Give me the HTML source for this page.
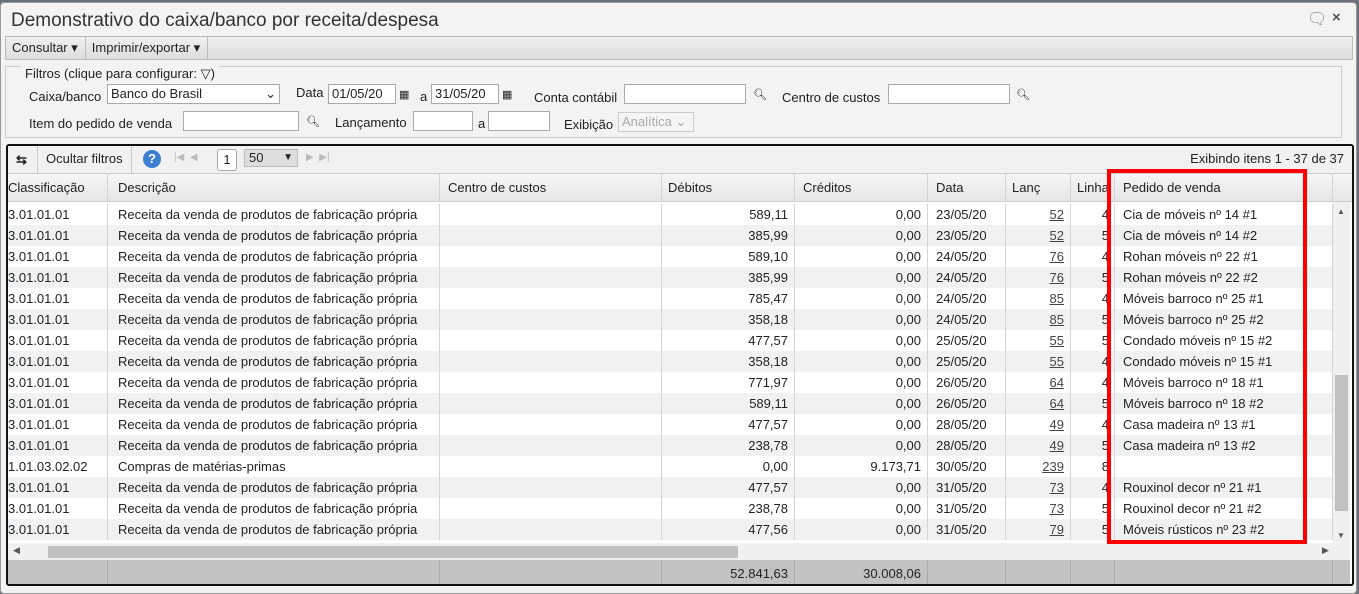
<!DOCTYPE html><html><head><style>
body{margin:0;width:1359px;height:594px;background:#6b7178;font-family:"Liberation Sans",sans-serif;font-size:13px;color:#222;position:relative;overflow:hidden}
.win{position:absolute;left:0;top:2px;width:1355px;height:590px;background:#f3f3f3;border:1px solid #999;border-radius:4px}
.title{position:absolute;left:10px;top:7px;font-size:19px;color:#333}
.tb{position:absolute;left:4px;top:33px;width:1346px;height:22px;background:linear-gradient(#f0f0f0,#ddd);border:1px solid #bbb}
.tb span{display:inline-block;padding:3px 7px 0 6px;height:19px;border-right:1px solid #bbb}
fieldset{position:absolute;left:4px;top:63px;width:1335px;height:70px;border:1px solid #ccc;margin:0;padding:0}
.a{position:absolute;white-space:nowrap}
.in{position:absolute;height:20px;background:#fff;border:1px solid #aaa;box-sizing:border-box;padding:1px 3px}
.grid{position:absolute;left:5px;top:141px;width:1344px;height:438px;border:2px solid #111;border-radius:3px;background:#fff;overflow:hidden}
.gt{position:absolute;left:0;top:0;width:100%;height:27px;background:#f1f1f1;border-bottom:1px solid #ccc}
.hd{position:absolute;left:0;top:28px;width:100%;height:27px;background:linear-gradient(#f6f6f6,#e6e6e6);border-bottom:1px solid #ccc}
.c{position:absolute;top:0;height:100%;box-sizing:border-box;border-right:1px solid #d5d5d5;padding:6px 6px 0;white-space:nowrap;overflow:hidden}
.row{position:absolute;left:0;width:1325px;height:21px}
.row .c{padding-top:3px}
.r{text-align:right}
u{color:#444}
</style></head><body>
<div class="win">
<div class="title">Demonstrativo do caixa/banco por receita/despesa</div>
<div class="a" style="left:1306px;top:6px;font-size:16px;color:#888">&#128488;</div>
<div class="a" style="left:1331px;top:6px;font-size:15px;font-weight:bold;color:#555">×</div>
<div class="tb"><span>Consultar ▾</span><span>Imprimir/exportar ▾</span></div>
<fieldset></fieldset>
<div class="a" style="left:20px;top:63px;background:#f3f3f3;padding:0 4px">Filtros (clique para configurar: ▽)</div>
<div class="a" style="left:28px;top:86px">Caixa/banco</div>
<div class="in" style="left:106px;top:81px;width:173px">Banco do Brasil<span style="float:right">⌄</span></div>
<div class="a" style="left:295px;top:82px">Data</div>
<div class="in" style="left:327px;top:81px;width:68px">01/05/20</div>
<div class="a" style="left:398px;top:85px;font-size:11px">▦</div>
<div class="a" style="left:419px;top:86px">a</div>
<div class="in" style="left:430px;top:81px;width:68px">31/05/20</div>
<div class="a" style="left:501px;top:85px;font-size:11px">▦</div>
<div class="a" style="left:533px;top:87px">Conta contábil</div>
<div class="in" style="left:623px;top:81px;width:122px"></div>
<div class="a" style="left:752px;top:85px;font-size:11px">🔍︎</div>
<div class="a" style="left:781px;top:87px">Centro de custos</div>
<div class="in" style="left:887px;top:81px;width:122px"></div>
<div class="a" style="left:1015px;top:85px;font-size:11px">🔍︎</div>
<div class="a" style="left:28px;top:113px">Item do pedido de venda</div>
<div class="in" style="left:182px;top:108px;width:116px"></div>
<div class="a" style="left:305px;top:112px;font-size:11px">🔍︎</div>
<div class="a" style="left:334px;top:112px">Lançamento</div>
<div class="in" style="left:412px;top:108px;width:60px"></div>
<div class="a" style="left:477px;top:113px">a</div>
<div class="in" style="left:487px;top:108px;width:62px"></div>
<div class="a" style="left:563px;top:114px">Exibição</div>
<div class="in" style="left:617px;top:109px;width:76px;color:#aaa;border-color:#ccc;background:#f5f5f5">Analítica ⌄</div>
<div class="grid">
<div class="gt">
<div class="a" style="left:8px;top:6px;font-weight:bold">⇆</div>
<div class="a" style="left:29px;top:0;height:27px;border-left:1px solid #ccc;border-right:1px solid #ccc;padding:5px 8px 0;box-sizing:border-box">Ocultar filtros</div>
<div class="a" style="left:135px;top:4px;width:18px;height:18px;border-radius:50%;background:#3c7fd0;color:#fff;text-align:center;font-weight:bold;font-size:13px;line-height:18px">?</div>
<div class="a" style="left:166px;top:6px;color:#bbb;font-size:10px">|◀ &nbsp;◀</div>
<div class="a" style="left:209px;top:3px;width:18px;height:20px;border:1px solid #aaa;border-radius:3px;background:#fff;text-align:center;line-height:20px">1</div>
<div class="a" style="left:236px;top:3px;width:54px;height:18px;background:#ddd;border:1px solid #bbb;padding-left:4px;box-sizing:border-box;line-height:16px">50 <span style="float:right;padding-right:4px;font-size:10px">▼</span></div>
<div class="a" style="left:298px;top:6px;color:#bbb;font-size:10px">▶ &nbsp;▶|</div>
<div class="a" style="right:8px;top:5px">Exibindo itens 1 - 37 de 37</div>
</div>
<div class="hd">
<div class="c" style="left:-6px;width:106px;padding-left:6px">Classificação</div>
<div class="c" style="left:104px;width:328px">Descrição</div>
<div class="c" style="left:432px;width:222px;padding-left:8px">Centro de custos</div>
<div class="c" style="left:654px;width:133px">Débitos</div>
<div class="c" style="left:787px;width:133px;padding-left:8px">Créditos</div>
<div class="c" style="left:920px;width:78px;padding-left:8px">Data</div>
<div class="c" style="left:998px;width:65px">Lanç</div>
<div class="c" style="left:1063px;width:44px">Linha</div>
<div class="c" style="left:1107px;width:218px;padding-left:8px">Pedido de venda</div>
</div>
<div id="rows"></div>
<div class="a" style="left:1325px;top:56px;width:17px;height:342px;background:#f0f0f0"></div>
<div class="a" style="left:1327px;top:229px;width:13px;height:136px;background:#c1c1c1"></div>
<div class="a" style="left:1329px;top:61px;font-size:8px;color:#555">▲</div>
<div class="a" style="left:1329px;top:385px;font-size:8px;color:#555">▼</div>
<div class="a" style="left:0;top:397px;width:1342px;height:17px;background:#f0f0f0"></div>
<div class="a" style="left:40px;top:400px;width:690px;height:12px;background:#c1c1c1"></div>
<div class="a" style="left:5px;top:399px;font-size:9px;color:#555">◀</div>
<div class="a" style="left:1314px;top:399px;font-size:9px;color:#555">▶</div>
<div class="a" style="left:0;top:414px;width:1342px;height:24px;background:#c2c2c2">
<div class="c r" style="left:-6px;width:106px;border-color:#aaa"></div>
<div class="c" style="left:104px;width:328px;border-color:#aaa"></div>
<div class="c" style="left:432px;width:222px;border-color:#aaa"></div>
<div class="c r" style="left:654px;width:133px;border-color:#aaa">52.841,63</div>
<div class="c r" style="left:787px;width:133px;border-color:#aaa">30.008,06</div>
<div class="c" style="left:920px;width:78px;border-color:#aaa"></div>
<div class="c" style="left:998px;width:65px;border-color:#aaa"></div>
<div class="c" style="left:1063px;width:44px;border-color:#aaa"></div>
<div class="c" style="left:1107px;width:218px;border-color:#aaa"></div>
</div>
</div>
<div class="a" style="left:1106px;top:166px;width:192px;height:367px;border:4px solid #f00"></div>
</div>
<script>
var R="Receita da venda de produtos de fabricação própria";
var d=[["3.01.01.01",R,"589,11","0,00","23/05/20","52","4","Cia de móveis nº 14 #1"],
["3.01.01.01",R,"385,99","0,00","23/05/20","52","5","Cia de móveis nº 14 #2"],
["3.01.01.01",R,"589,10","0,00","24/05/20","76","4","Rohan móveis nº 22 #1"],
["3.01.01.01",R,"385,99","0,00","24/05/20","76","5","Rohan móveis nº 22 #2"],
["3.01.01.01",R,"785,47","0,00","24/05/20","85","4","Móveis barroco nº 25 #1"],
["3.01.01.01",R,"358,18","0,00","24/05/20","85","5","Móveis barroco nº 25 #2"],
["3.01.01.01",R,"477,57","0,00","25/05/20","55","5","Condado móveis nº 15 #2"],
["3.01.01.01",R,"358,18","0,00","25/05/20","55","4","Condado móveis nº 15 #1"],
["3.01.01.01",R,"771,97","0,00","26/05/20","64","4","Móveis barroco nº 18 #1"],
["3.01.01.01",R,"589,11","0,00","26/05/20","64","5","Móveis barroco nº 18 #2"],
["3.01.01.01",R,"477,57","0,00","28/05/20","49","4","Casa madeira nº 13 #1"],
["3.01.01.01",R,"238,78","0,00","28/05/20","49","5","Casa madeira nº 13 #2"],
["1.01.03.02.02","Compras de matérias-primas","0,00","9.173,71","30/05/20","239","8",""],
["3.01.01.01",R,"477,57","0,00","31/05/20","73","4","Rouxinol decor nº 21 #1"],
["3.01.01.01",R,"238,78","0,00","31/05/20","73","5","Rouxinol decor nº 21 #2"],
["3.01.01.01",R,"477,56","0,00","31/05/20","79","5","Móveis rústicos nº 23 #2"]];
var h="";d.forEach(function(r,i){h+='<div class="row" style="top:'+(58+i*21)+'px;background:'+(i%2?'#f0f1f3':'#fff')+'">'+
'<div class="c" style="left:-6px;width:106px;padding-left:6px">'+r[0]+'</div>'+
'<div class="c" style="left:104px;width:328px">'+r[1]+'</div>'+
'<div class="c" style="left:432px;width:222px"></div>'+
'<div class="c r" style="left:654px;width:133px">'+r[2]+'</div>'+
'<div class="c r" style="left:787px;width:133px">'+r[3]+'</div>'+
'<div class="c" style="left:920px;width:78px;padding-left:8px">'+r[4]+'</div>'+
'<div class="c r" style="left:998px;width:65px;padding-right:6px"><u>'+r[5]+'</u></div>'+
'<div class="c r" style="left:1063px;width:44px;padding-right:5px">'+r[6]+'</div>'+
'<div class="c" style="left:1107px;width:218px;padding-left:8px">'+r[7]+'</div></div>';});
document.getElementById("rows").innerHTML=h;
</script>
</body></html>
